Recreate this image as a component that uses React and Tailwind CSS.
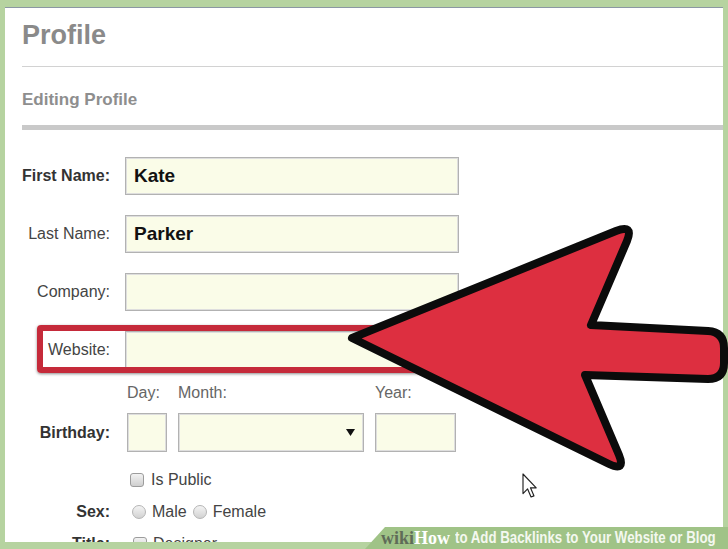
// Profile edit form with a highlight arrow pointing at the Website field

const inputCls =
  'h-[38px] w-[334px] ml-[15px] bg-[#fafce8] border border-[#b2b2b2] shadow-[inset_0_0_0_1px_#dedede] flex items-center pl-[8px] text-[19px] font-bold text-[#111]'

function Row({ label, bold, value, className = '' }) {
  return (
    <div className={`flex items-center ${className}`}>
      <div
        className={`w-[88px] shrink-0 flex justify-end whitespace-nowrap text-[16px] leading-[20px] ${
          bold ? 'font-bold text-[#333]' : 'text-[#444]'
        }`}
      >
        {label}
      </div>
      <div className={inputCls}>{value}</div>
    </div>
  )
}

function Checkbox() {
  return (
    <span className="block w-[14px] h-[14px] rounded-[3px] border border-[#9c9c9c] bg-gradient-to-b from-[#f2f2f2] to-[#cfcfcf]" />
  )
}

function Radio() {
  return (
    <span className="block w-[14px] h-[14px] rounded-full border border-[#b5b5b5] bg-gradient-to-b from-[#f4f4f4] to-[#d2d2d2]" />
  )
}

export default function App() {
  return (
    <div className="relative w-[728px] h-[549px] overflow-hidden bg-[#b6d3a0] pt-[7px] pl-[5px] font-['Liberation_Sans',Arial,sans-serif]">
      {/* White page panel */}
      <div className="w-[718px] h-[535px] overflow-hidden bg-white border-t border-[#8b97a3] pl-[17px] pt-[11px]">
        <h1 className="text-[27px] leading-[32px] font-bold text-[#8a8a8a]">Profile</h1>
        <div className="mt-[15px] h-px bg-[#d2d2d2]" />
        <h2 className="mt-[23px] text-[17px] leading-[20px] font-bold text-[#8e8e8e]">Editing Profile</h2>
        <div className="mt-[15px] h-[5px] bg-[#c9c9c9]" />

        {/* Form */}
        <div className="mt-[27px] flex flex-col">
          <Row label="First Name:" bold value="Kate" />
          <Row label="Last Name:" value="Parker" className="mt-[20px]" />
          <Row label="Company:" className="mt-[20px]" />

          <div className="relative mt-[20px]">
            <Row label="Website:" />
            <div className="absolute left-[15px] top-[-6px] w-[450px] h-[48px] border-[6px] border-[#c52a3a] rounded-[4px] shadow-[0_1px_3px_rgba(0,0,0,0.45)]" />
          </div>

          {/* Birthday */}
          <div className="mt-[14px] flex items-end">
            <div className="w-[88px] shrink-0 h-[39px] flex items-center justify-end text-[16px] font-bold text-[#333]">
              Birthday:
            </div>
            <div className="ml-[17px] flex flex-col">
              <div className="flex h-[20px] text-[16px] leading-[20px] text-[#666]">
                <span className="w-[40px]">Day:</span>
                <span className="ml-[11px] w-[186px]">Month:</span>
                <span className="ml-[11px] w-[81px]">Year:</span>
              </div>
              <div className="mt-[10px] flex h-[39px]">
                <div className="w-[40px] bg-[#fafce8] border border-[#b2b2b2] shadow-[inset_0_0_0_1px_#dedede]" />
                <div className="ml-[11px] w-[186px] bg-[#fafce8] border border-[#b2b2b2] shadow-[inset_0_0_0_1px_#dedede] flex items-center justify-end pr-[8px]">
                  <svg width="9" height="7" viewBox="0 0 9 7">
                    <polygon points="0,0 9,0 4.5,7" fill="#111" />
                  </svg>
                </div>
                <div className="ml-[11px] w-[81px] bg-[#fafce8] border border-[#b2b2b2] shadow-[inset_0_0_0_1px_#dedede]" />
              </div>
            </div>
          </div>

          {/* Is Public */}
          <div className="mt-[18px] flex items-center h-[20px] text-[16px] text-[#444]">
            <div className="w-[88px] shrink-0" />
            <span className="ml-[20px]"><Checkbox /></span>
            <span className="ml-[7px]">Is Public</span>
          </div>

          {/* Sex */}
          <div className="mt-[12px] flex items-center h-[20px] text-[16px] text-[#444]">
            <div className="w-[88px] shrink-0 text-right font-bold text-[#333]">Sex:</div>
            <span className="ml-[22px]"><Radio /></span>
            <span className="ml-[6px]">Male</span>
            <span className="ml-[6px]"><Radio /></span>
            <span className="ml-[6px]">Female</span>
          </div>

          {/* Title (cut off by the frame, as in the capture) */}
          <div className="mt-[12px] flex items-center h-[20px] text-[16px] text-[#444]">
            <div className="w-[88px] shrink-0 text-right font-bold text-[#333]">Title:</div>
            <span className="ml-[23px]"><Checkbox /></span>
            <span className="ml-[6px]">Designer</span>
          </div>
        </div>
      </div>

      {/* Arrow + cursor overlay */}
      <svg className="absolute inset-0 pointer-events-none" width="728" height="549" viewBox="0 0 728 549">
        <path
          d="M 352 338 L 616 231 Q 634 224 627 241 L 591 325 L 708 331 Q 724 332 724 348 L 724 363 Q 724 379 708 379 L 585 375 L 619 455 Q 626 472 609 464 Z"
          fill="#dd2f40"
          stroke="#0b0b0b"
          strokeWidth="8"
          strokeLinejoin="round"
        />
        <g transform="translate(523 474) scale(1.15)">
          <path
            d="M0 0 L0 17 L4 13 L7 20 L9.5 19 L6.5 12 L11.5 12 Z"
            fill="#fff"
            stroke="#222"
            strokeWidth="1"
            strokeLinejoin="round"
          />
        </g>
      </svg>

      {/* wikiHow caption bar */}
      <div className="absolute right-0 bottom-0 w-[363px] h-[22px] bg-[#a0c387] [clip-path:polygon(20px_0,100%_0,100%_100%,0_100%)] flex items-center pl-[16px] whitespace-nowrap">
        <span className="font-['Liberation_Serif',serif] font-bold text-[18px] leading-[22px] text-[#5f6b58]">wiki</span>
        <span className="font-['Liberation_Serif',serif] font-bold text-[18px] leading-[22px] text-white">How</span>
        <span className="ml-[5px] inline-block origin-left scale-x-[0.83] text-[16px] leading-[22px] font-bold text-[#f4f8f0]">
          to Add Backlinks to Your Website or Blog
        </span>
      </div>
    </div>
  )
}
